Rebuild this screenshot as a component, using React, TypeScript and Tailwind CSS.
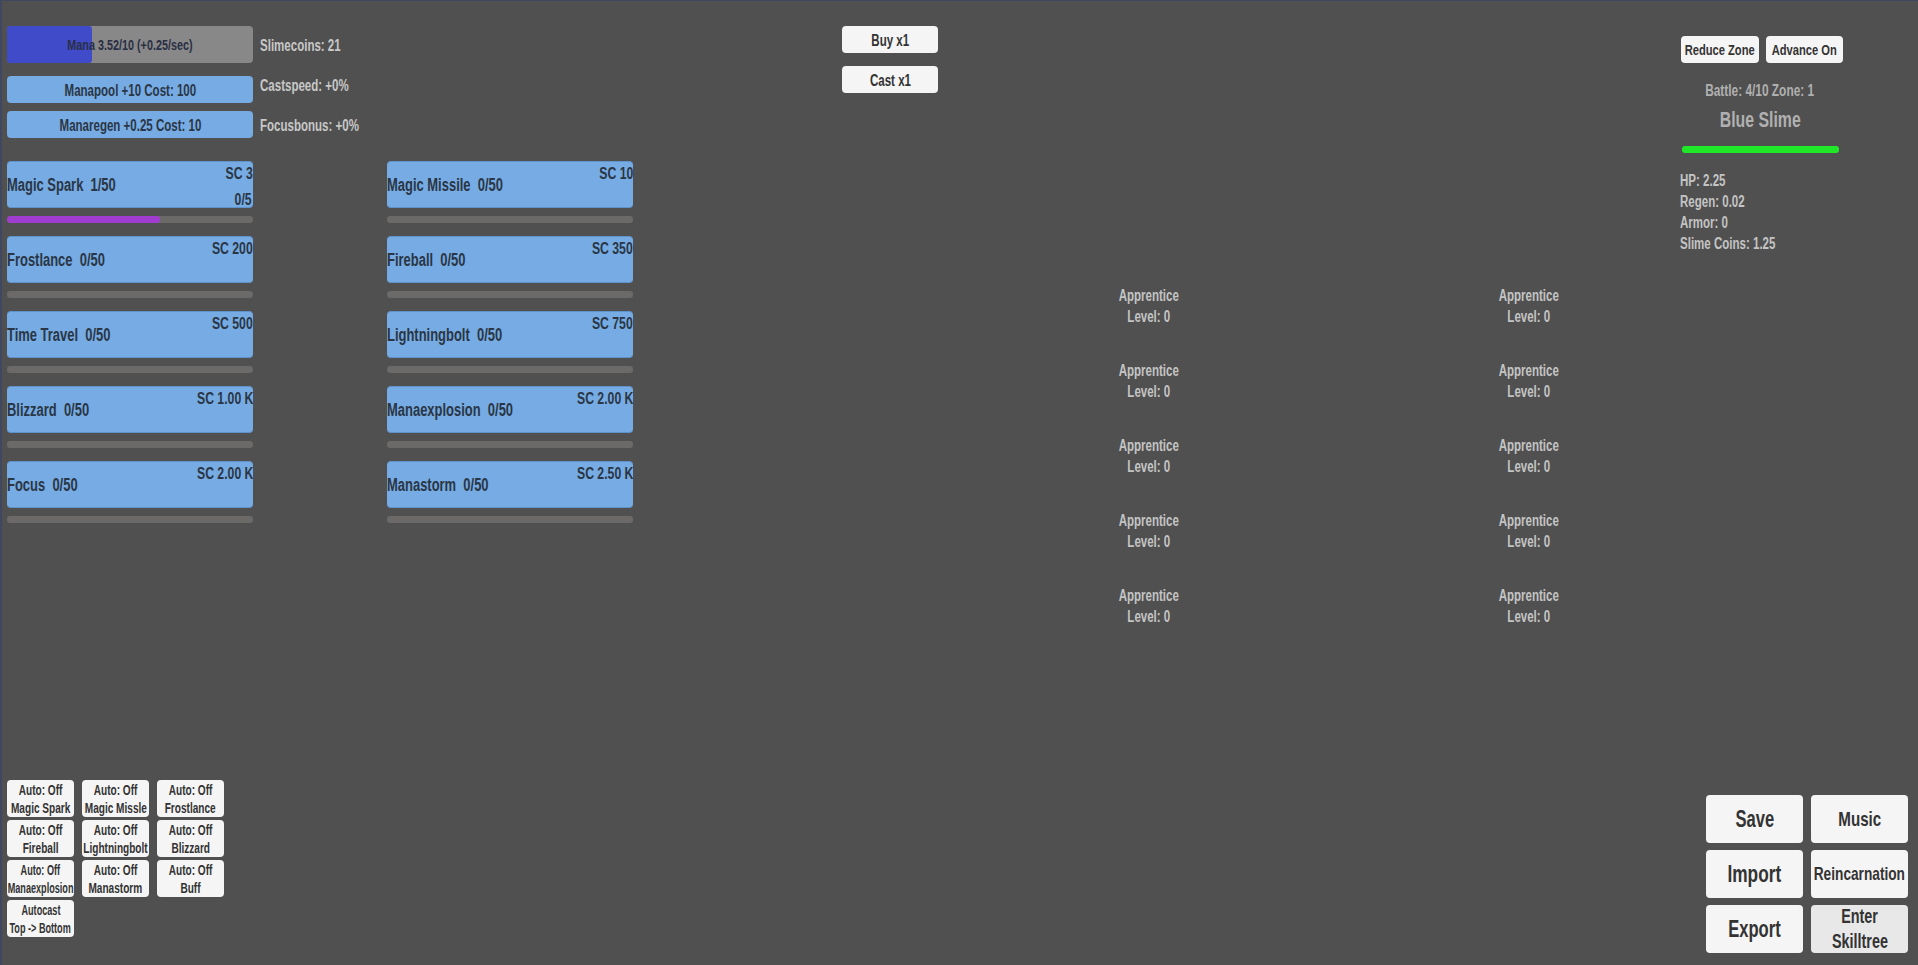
// no condensed font is installed, so Liberation Sans gets squeezed to the width of the reference's face
function T({ children, side = "center", narrow = false }: { children: React.ReactNode; side?: "left" | "center" | "right"; narrow?: boolean }) {
  const origin = side === "left" ? "origin-left" : side === "right" ? "origin-right" : "origin-center";
  return <span className={`inline-block shrink-0 whitespace-pre ${narrow ? "scale-x-[0.65]" : "scale-x-[0.72]"} ${origin}`}>{children}</span>;
}

const skills = [
  ["Magic Spark", "1/50", "SC 3", "Magic Missile", "0/50", "SC 10"],
  ["Frostlance", "0/50", "SC 200", "Fireball", "0/50", "SC 350"],
  ["Time Travel", "0/50", "SC 500", "Lightningbolt", "0/50", "SC 750"],
  ["Blizzard", "0/50", "SC 1.00 K", "Manaexplosion", "0/50", "SC 2.00 K"],
  ["Focus", "0/50", "SC 2.00 K", "Manastorm", "0/50", "SC 2.50 K"],
];

const autos = [
  ["Auto: Off", "Magic Spark"],
  ["Auto: Off", "Magic Missle"],
  ["Auto: Off", "Frostlance"],
  ["Auto: Off", "Fireball"],
  ["Auto: Off", "Lightningbolt"],
  ["Auto: Off", "Blizzard"],
  ["Auto: Off", "Manaexplosion"],
  ["Auto: Off", "Manastorm"],
  ["Auto: Off", "Buff"],
  ["Autocast", "Top -> Bottom"],
];

function Skill({ name, level, cost, progress, cap }: { name: string; level: string; cost: string; progress?: number; cap?: string }) {
  return (
    <div className="w-[246px]">
      <div className="relative flex h-[47px] items-center rounded-[4px] border-t border-b border-[#5f93cc] bg-[#76abe3] pt-[2px] text-[18px] font-bold text-[#2a3645]">
        <T side="left">{name}  {level}</T>
        <span className="absolute right-0 top-[2px] text-[17px] leading-[20px]"><T side="right">{cost}</T></span>
        {cap && <span className="absolute bottom-[-3px] right-[1px] text-[17px] leading-[20px]"><T side="right">{cap}</T></span>}
      </div>
      <div className="mt-[8px] h-[7px] overflow-hidden rounded-[3px] bg-[#6c6a69]">
        {progress ? <div className="h-full rounded-[3px] bg-[#a03cd0]" style={{ width: `${progress}%` }} /> : null}
      </div>
    </div>
  );
}

function Apprentice() {
  return (
    <div className="flex h-[75px] w-[247px] flex-col items-center text-[16px] font-bold leading-[21px] text-[#c4c4c4]">
      <T>Apprentice</T>
      <T>Level: 0</T>
    </div>
  );
}

export default function App() {
  return (
    <div className="flex h-[965px] w-[1918px] overflow-hidden border-l-2 border-t border-[#3f4860] bg-[#505050] pl-[5px] font-['Liberation_Sans',sans-serif]">
      {/* left column */}
      <div className="flex h-full w-[627px] flex-col justify-between pb-[28px] pt-[25px]">
        <div>
          <div className="flex gap-[7px]">
            <div className="flex w-[246px] flex-col gap-[8px]">
              <div className="relative mb-[5px] flex h-[37px] items-center justify-center rounded-[4px] bg-[#888888] pt-[2px] text-[15px] font-bold text-[#2a2f45]">
                <div className="absolute inset-y-0 left-0 w-[85px] rounded-[3px] bg-[#3f4bc8]" />
                <span className="relative flex justify-center"><T>Mana 3.52/10 (+0.25/sec)</T></span>
              </div>
              <div className="flex h-[27px] items-center justify-center rounded-[4px] bg-[#76abe3] pt-[2px] text-[16px] font-bold text-[#2a3645]"><T>Manapool +10 Cost: 100</T></div>
              <div className="flex h-[27px] items-center justify-center rounded-[4px] bg-[#76abe3] pt-[2px] text-[16px] font-bold text-[#2a3645]"><T>Manaregen +0.25 Cost: 10</T></div>
            </div>
            <div className="flex flex-col items-start pt-[10px] text-[16px] font-bold leading-[20px] text-[#c8c8c8]">
              <T side="left">Slimecoins: 21</T>
              <span className="mt-[20px]"><T side="left">Castspeed: +0%</T></span>
              <span className="mt-[20px]"><T side="left">Focusbonus: +0%</T></span>
            </div>
          </div>
          <div className="mt-[23px] grid grid-cols-[246px_246px] gap-x-[134px] gap-y-[13px]">
            {skills.map((s, i) => (
              <div key={s[0]} className="contents">
                <Skill name={s[0]} level={s[1]} cost={s[2]} progress={i === 0 ? 62 : 0} cap={i === 0 ? "0/5" : undefined} />
                <Skill name={s[3]} level={s[4]} cost={s[5]} />
              </div>
            ))}
          </div>
        </div>
        <div className="grid w-[217px] grid-cols-[67px_67px_67px] gap-x-[8px] gap-y-[3px]">
          {autos.map((a, i) => (
            <div key={a[1]} className={`flex h-[37px] flex-col items-center justify-center rounded-[4px] bg-[#f5f5f5] font-bold leading-[18px] text-[#333333] ${i === 6 || i === 9 ? "text-[14px]" : "text-[15.5px]"}`}>
              <T narrow>{a[0]}</T>
              <T narrow>{a[1]}</T>
            </div>
          ))}
        </div>
      </div>

      {/* buy and cast */}
      <div className="ml-[208px] flex w-[96px] flex-col gap-[13px] pt-[25px]">
        <div className="flex h-[27px] items-center justify-center rounded-[4px] bg-[#f5f5f5] pt-[2px] text-[16px] font-bold text-[#333333]"><T>Buy x1</T></div>
        <div className="flex h-[27px] items-center justify-center rounded-[4px] bg-[#f5f5f5] pt-[2px] text-[16px] font-bold text-[#333333]"><T>Cast x1</T></div>
      </div>

      {/* apprentices */}
      <div className="ml-[87px] grid h-fit w-[627px] grid-cols-[247px_247px] gap-x-[133px] pt-[284px]">
        {Array.from({ length: 10 }, (_, i) => (
          <Apprentice key={i} />
        ))}
      </div>

      {/* battle column */}
      <div className="ml-[28px] flex w-[231px] flex-col justify-between pb-[12px] pt-[35px]">
        <div>
          <div className="flex gap-[7px] pl-[1px]">
            <div className="flex h-[27px] w-[78px] items-center justify-center rounded-[4px] bg-[#f5f5f5] text-[15.5px] font-bold text-[#333333]"><T>Reduce Zone</T></div>
            <div className="flex h-[27px] w-[77px] items-center justify-center rounded-[4px] bg-[#f5f5f5] text-[15.5px] font-bold text-[#333333]"><T>Advance On</T></div>
          </div>
          <div className="flex w-[160px] flex-col items-center">
            <div className="mt-[17px] flex justify-center text-[16.5px] font-bold leading-[20px] text-[#b0b0b0]"><T>Battle: 4/10 Zone: 1</T></div>
            <div className="mt-[5px] flex justify-center text-[22px] font-bold leading-[30px] text-[#b0b0b0]"><T>Blue Slime</T></div>
            <div className="ml-[1px] mt-[11px] h-[7px] w-[157px] rounded-[3px] bg-[#20e828]" />
          </div>
          <div className="mt-[17px] flex flex-col items-start text-[16px] font-bold leading-[21px] text-[#c4c4c4]">
            <T side="left">HP: 2.25</T>
            <T side="left">Regen: 0.02</T>
            <T side="left">Armor: 0</T>
            <T side="left">Slime Coins: 1.25</T>
          </div>
        </div>
        <div className="ml-[26px] grid grid-cols-[97px_97px] gap-x-[8px] gap-y-[7px] text-[#333333]">
          <div className="flex h-[48px] items-center justify-center rounded-[4px] bg-[#f5f5f5] text-[23px] font-bold"><T>Save</T></div>
          <div className="flex h-[48px] items-center justify-center rounded-[4px] bg-[#f5f5f5] text-[21px] font-bold"><T>Music</T></div>
          <div className="flex h-[48px] items-center justify-center rounded-[4px] bg-[#f5f5f5] text-[24px] font-bold"><T>Import</T></div>
          <div className="flex h-[48px] items-center justify-center rounded-[4px] bg-[#f5f5f5] text-[19px] font-bold"><T>Reincarnation</T></div>
          <div className="flex h-[48px] items-center justify-center rounded-[4px] bg-[#f5f5f5] text-[23px] font-bold"><T>Export</T></div>
          <div className="flex h-[48px] flex-col items-center justify-center rounded-[4px] bg-[#e8e8e8] text-[20px] font-bold leading-[25px]">
            <T>Enter</T>
            <T>Skilltree</T>
          </div>
        </div>
      </div>
    </div>
  );
}
